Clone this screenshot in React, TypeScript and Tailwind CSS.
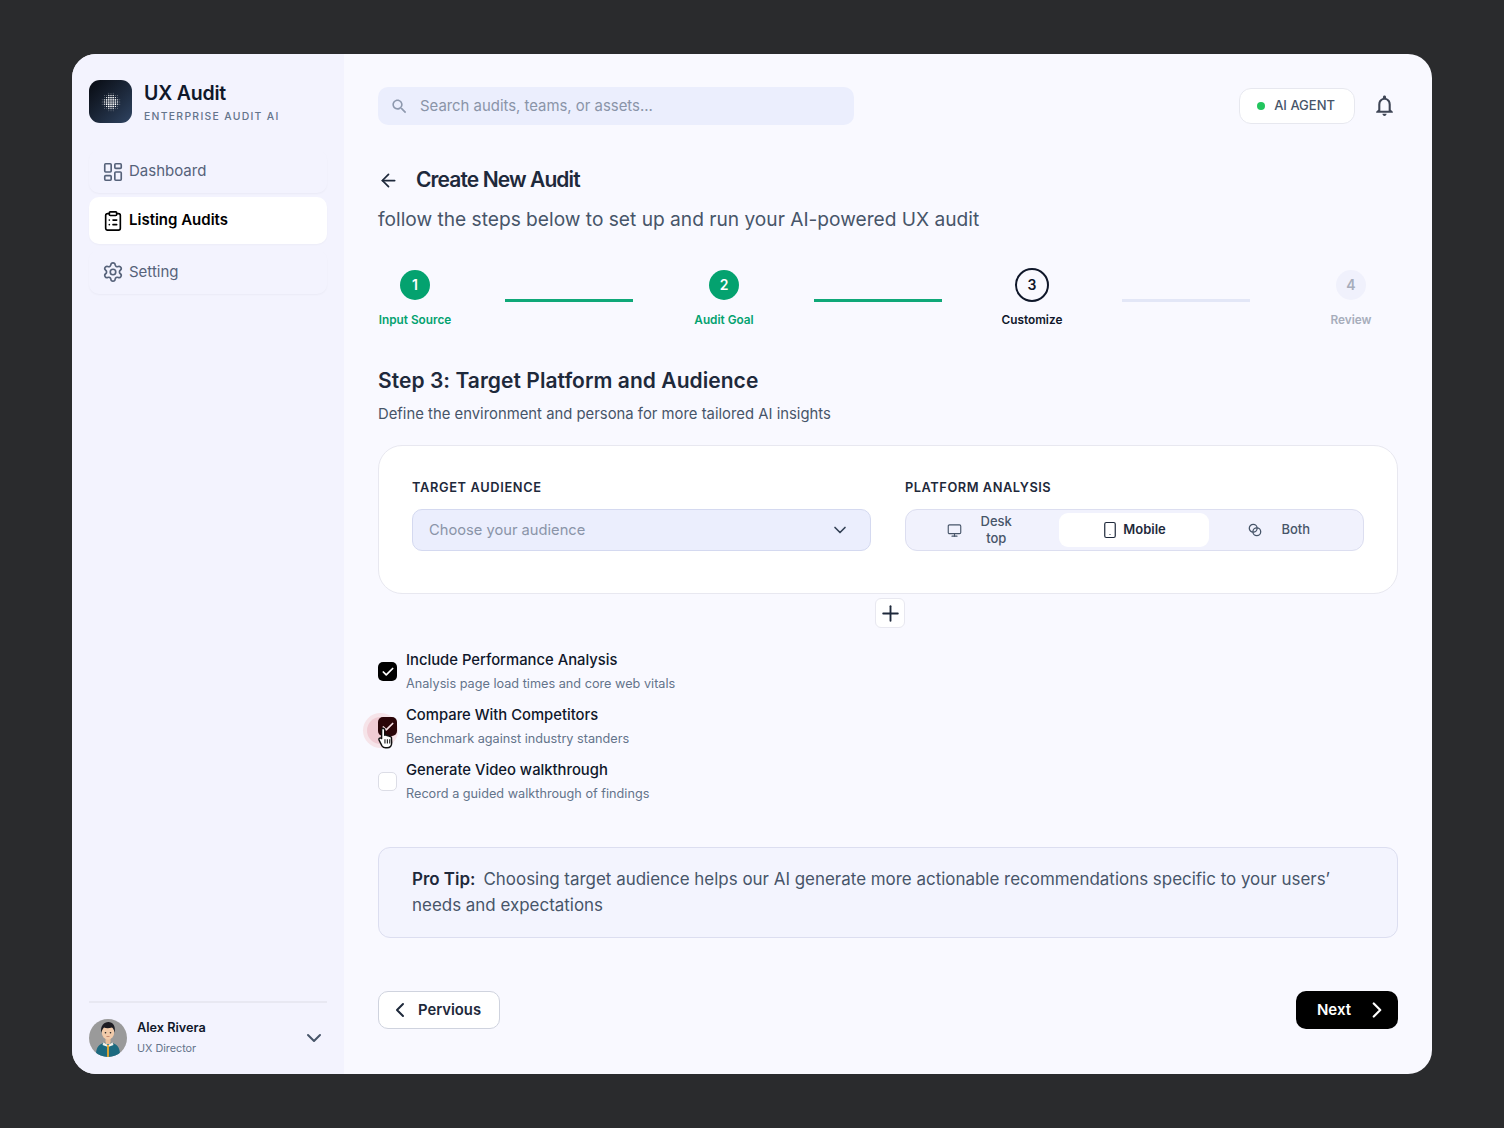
import { useState } from 'react';
import {
  ArrowLeft, Check, ChevronDown, ChevronLeft, ChevronRight, ClipboardList,
  LayoutDashboard, Monitor, Plus, Settings, Smartphone,
} from 'lucide-react';

const NAV = [
  { label: 'Dashboard', icon: LayoutDashboard, active: false },
  { label: 'Listing Audits', icon: ClipboardList, active: true },
  { label: 'Setting', icon: Settings, active: false },
];

const OPTIONS = [
  { title: 'Include Performance Analysis', desc: 'Analysis page load times and core web vitals', checked: true, hover: false },
  { title: 'Compare With Competitors', desc: 'Benchmark against industry standers', checked: true, hover: true },
  { title: 'Generate Video walkthrough', desc: 'Record a guided walkthrough of findings', checked: false, hover: false },
];

function LogoDots() {
  const dots = [];
  for (let y = 0; y < 9; y++) {
    for (let x = 0; x < 9; x++) {
      const d = Math.hypot(x - 4, y - 4);
      if (d > 4.3) continue;
      dots.push(<circle key={`${x}-${y}`} cx={1.2 + x * 2.2} cy={1.2 + y * 2.2} r={d < 2.3 ? 0.85 : d < 3.3 ? 0.65 : 0.42} fill="#fff" opacity={d < 3.3 ? 1 : 0.7} />);
    }
  }
  return <svg width="20" height="20" viewBox="0 0 20 20">{dots}</svg>;
}

function AvatarArt() {
  return (
    <svg width="38" height="38" viewBox="0 0 38 38" className="rounded-full">
      <rect width="38" height="38" fill="#9a9a9a" />
      <path d="M7 36c0-8 3-11 8-12l4-1 4 1c5 1 8 4 8 12l-4 2H11z" fill="#1c6a80" />
      <path d="M14.500 23.500l4.500 2.500 4.500-2.500 1 2.500-5.500 2-5.500-2z" fill="#f4f1ea" />
      <rect x="18.100" y="26" width="1.800" height="12" fill="#eda92c" />
      <rect x="16.500" y="18" width="5" height="7" fill="#e9bd9a" />
      <ellipse cx="19" cy="13.500" rx="6.200" ry="7.200" fill="#f2cbaa" />
      <path d="M12.300 14c-1.300-7.500 3-11 7-11 4.500 0 7.500 3.500 6.400 11-.5-3-1.300-4.800-2.700-5.500-3 1-6 1-8 0-1.200 1-2.200 3-2.700 5.500z" fill="#1d1c22" />
      <circle cx="16.500" cy="13.800" r=".8" fill="#222" />
      <circle cx="21.500" cy="13.800" r=".8" fill="#222" />
      <path d="M17.500 17.500h3" stroke="#a8604a" strokeWidth=".6" />
    </svg>
  );
}

function SearchGlyph() {
  return (
    <svg width="19" height="19" viewBox="0 0 24 24" fill="#8e99ae" className="shrink-0">
      <path d="M15.500 14h-.79l-.28-.27C15.410 12.590 16 11.110 16 9.500 16 5.910 13.090 3 9.500 3S3 5.910 3 9.500 5.910 16 9.500 16c1.610 0 3.090-.59 4.230-1.570l.27.28v.79l5 4.990L20.490 19l-4.990-5zm-6 0C7.010 14 5 11.990 5 9.500S7.010 5 9.500 5 14 7.010 14 9.500 11.990 14 9.500 14z" />
    </svg>
  );
}

function BellGlyph() {
  return (
    <svg width="25" height="25" viewBox="0 0 24 24" fill="#3f4656" className="-mt-[2px] ml-[17px] mr-[1px]">
      <path d="M12 22c1.100 0 2-.9 2-2h-4c0 1.100.89 2 2 2zm6-6v-5c0-3.070-1.640-5.640-4.500-6.320V4c0-.83-.67-1.500-1.500-1.500s-1.500.67-1.500 1.500v.68C7.630 5.360 6 7.920 6 11v5l-2 2v1h16v-1l-2-2zm-2 1H8v-6c0-2.480 1.510-4.500 4-4.500s4 2.020 4 4.500v6z" />
    </svg>
  );
}

function BothIcon() {
  return (
    <svg width="14" height="14" viewBox="0 0 14 14" fill="none" stroke="#475569" strokeWidth="1.300">
      <circle cx="5.200" cy="5.200" r="3.900" />
      <circle cx="8.800" cy="8.800" r="3.900" />
    </svg>
  );
}

function HandCursor() {
  return (
    <svg width="20" height="24" viewBox="0 0 16 20" className="absolute -left-[1px] top-[9px]">
      <path
        d="M4.600 1.800c.9 0 1.500.6 1.500 1.500v4.400l.2-.1c.8-.3 1.500 0 1.800.5.8-.3 1.500 0 1.800.6.800-.3 1.700.2 1.800 1l.2 4.300c0 2.400-1.500 4.200-3.800 4.200H6.800c-1.400 0-2.300-.6-3-1.700L1.500 12c-.5-.8-.2-1.600.4-1.900.6-.3 1.200-.1 1.600.4V3.300c0-.9.400-1.500 1.100-1.500z"
        fill="#fff"
        stroke="#111"
        strokeWidth="1.200"
        strokeLinejoin="round"
      />
      <path d="M6.300 11v3.500M8.300 11v3.500M10.300 11v3.500" stroke="#111" strokeWidth=".9" />
    </svg>
  );
}

function Step({ n, label, state, width, ml }: { n: number; label: string; state: 'done' | 'current' | 'todo'; width: string; ml: string }) {
  return (
    <div className={`flex flex-col items-center ${width} ${ml}`}>
      {state === 'done' && (
        <div className="flex h-[30px] w-[30px] items-center justify-center rounded-full bg-[#04a26f] text-sm font-semibold text-white">{n}</div>
      )}
      {state === 'current' && (
        <div className="flex h-[34px] w-[34px] -my-[2px] items-center justify-center rounded-full border-2 border-[#0f172a] text-sm font-semibold text-[#0f172a]">{n}</div>
      )}
      {state === 'todo' && (
        <div className="flex h-[30px] w-[30px] items-center justify-center rounded-full bg-[#f0f1fc] text-sm font-semibold text-[#a7adbb]">{n}</div>
      )}
      <span
        className={`mt-[12px] text-[11.800px] font-semibold leading-[16px] whitespace-nowrap ${
          state === 'done' ? 'text-[#04a26f]' : state === 'current' ? 'text-[#0f172a]' : 'text-[#a7adbb]'
        }`}
      >
        {label}
      </span>
    </div>
  );
}

export default function App() {
  const [query, setQuery] = useState('');

  return (
    <div className="flex h-[1128px] w-[1504px] items-start justify-center bg-[#2a2b2d] pt-[54px] font-['Inter',sans-serif]">
      <div className="flex h-[1020px] w-[1360px] overflow-hidden rounded-[24px] bg-[#f9f9ff]">
        {/* Sidebar */}
        <aside className="flex w-[272px] shrink-0 flex-col bg-[#f3f3fe] px-[17px] pt-[25px]">
          <div className="flex items-center gap-[12px]">
            <div className="flex h-[43px] w-[43px] items-center justify-center rounded-[11px] bg-gradient-to-br from-[#080b12] to-[#2f4462]">
              <LogoDots />
            </div>
            <div className="mt-[1px]">
              <div className="text-[19.500px] font-semibold leading-[26px] tracking-[-0.2px] text-[#0f172a]">UX Audit</div>
              <div className="mt-[4px] text-[10.400px] font-medium leading-[14px] tracking-[1.3px] text-[#64748b]">ENTERPRISE AUDIT AI</div>
            </div>
          </div>

          <nav className="mt-[26px] flex flex-col">
            {NAV.map(item => {
              const Icon = item.icon;
              return (
                <div
                  key={item.label}
                  className={
                    item.active
                      ? 'mb-[6px] flex h-[47px] items-center gap-[5px] rounded-[10px] bg-white px-[13px] text-[15px] font-semibold text-black shadow-[0_1px_2px_rgba(15,23,42,0.03)]'
                      : 'mb-[4px] flex h-[44px] items-center gap-[5px] rounded-[10px] px-[13px] text-[15px] text-[#56627a] shadow-[0_1px_2px_rgba(15,23,42,0.04)] first:h-[43px]'
                  }
                >
                  <Icon className="h-[22px] w-[22px]" strokeWidth={1.8} />
                  {item.label}
                </div>
              );
            })}
          </nav>

          <div className="mt-auto flex h-[73px] items-center border-t-2 border-[#e8e8f2] pb-[1px]">
            <AvatarArt />
            <div className="ml-[10px] flex-1">
              <div className="-mt-[1px] text-[12.700px] font-semibold leading-[18px] text-[#0f172a]">Alex Rivera</div>
              <div className="mt-[4px] text-[10.800px] leading-[16px] text-[#64748b]">UX Director</div>
            </div>
            <ChevronDown className="mr-[1px] h-[24px] w-[24px] text-[#475569]" strokeWidth={2} />
          </div>
        </aside>

        {/* Main */}
        <main className="flex min-w-0 flex-1 flex-col px-[34px] pt-[33px]">
          <header className="flex items-center justify-between">
            <label className="flex h-[38px] w-[476px] items-center gap-[11px] rounded-[10px] bg-[#ebeefd] pl-[12px] pr-[14px]">
              <SearchGlyph />
              <input
                value={query}
                onChange={e => setQuery(e.target.value)}
                placeholder="Search audits, teams, or assets..."
                className="w-full bg-transparent text-[14.900px] text-[#0f172a] outline-none placeholder:text-[#8a94a8]"
              />
            </label>
            <div className="flex items-center">
              <div className="flex h-[36px] items-center gap-[9px] rounded-[12px] border border-[#e7e8ef] bg-white pl-[17px] pr-[19px] text-[13px] font-medium text-[#475569]">
                <span className="h-[8px] w-[8px] rounded-full bg-[#22c55e]" />
                AI AGENT
              </div>
              <BellGlyph />
            </div>
          </header>

          <div className="mt-[38px] flex h-[34px] items-center gap-[17px]">
            <ArrowLeft className="h-[21px] w-[21px] text-[#1e293b]" strokeWidth={2} />
            <h1 className="text-[21px] font-semibold tracking-[-0.9px] text-[#1e293b]">Create New Audit</h1>
          </div>
          <p className="mt-[7px] text-[19.150px] leading-[30px] text-[#475569]">follow the steps below to set up and run your AI-powered UX audit</p>

          <div className="mt-[36px] flex items-start">
            <Step n={1} label="Input Source" state="done" width="w-[74px]" ml="" />
            <div className="ml-[53px] mt-[29px] h-[2.500px] w-[128px] bg-[#0fa878]" />
            <Step n={2} label="Audit Goal" state="done" width="w-[76px]" ml="ml-[53px]" />
            <div className="ml-[52px] mt-[29px] h-[2.500px] w-[128px] bg-[#0fa878]" />
            <Step n={3} label="Customize" state="current" width="w-[76px]" ml="ml-[52px]" />
            <div className="ml-[52px] mt-[29px] h-[2.500px] w-[128px] bg-[#e3e7f7]" />
            <Step n={4} label="Review" state="todo" width="w-[76px]" ml="ml-[63px]" />
          </div>

          <h2 className="mt-[37px] text-[21px] font-semibold leading-[32px] tracking-[0.05px] text-[#1e293b]">Step 3: Target Platform and Audience</h2>
          <p className="mt-[6px] text-[14.850px] leading-[22px] text-[#475569]">Define the environment and persona for more tailored AI insights</p>

          <section className="mt-[20px] h-[149px] rounded-[24px] border border-[#e8e8f0] bg-white px-[33px] pt-[33px]">
            <div className="flex gap-[34px]">
              <div className="w-[459px]">
                <div className="text-[12.800px] font-semibold leading-[18px] tracking-[0.65px] text-[#1e293b]">TARGET AUDIENCE</div>
                <div className="mt-[12px] flex h-[42px] items-center justify-between rounded-[10px] border border-[#d4d9f0] bg-[#ebeefd] pl-[16px] pr-[20px] text-[14.700px] text-[#8a94a8]">
                  Choose your audience
                  <ChevronDown className="h-[20px] w-[20px] text-[#334155]" strokeWidth={2} />
                </div>
              </div>
              <div className="w-[459px]">
                <div className="text-[12.800px] font-semibold leading-[18px] tracking-[0.55px] text-[#1e293b]">PLATFORM ANALYSIS</div>
                <div className="mt-[12px] flex h-[42px] items-center rounded-[12px] border border-[#dcdef0] bg-[#f1f2fd] px-[3px] text-[13px] font-medium text-[#475569]">
                  <div className="flex h-[34px] flex-1 items-center justify-center gap-[18px] pr-[8px]">
                    <Monitor className="h-[15px] w-[15px]" strokeWidth={1.8} />
                    <span className="w-[32px] text-center leading-[17px]">Desk top</span>
                  </div>
                  <div className="flex h-[34px] w-[150px] items-center justify-center gap-[4px] rounded-[9px] bg-white font-semibold text-[#1e293b]">
                    <Smartphone className="h-[18px] w-[18px]" strokeWidth={1.6} />
                    Mobile
                  </div>
                  <div className="flex h-[34px] flex-1 items-center justify-center gap-[19px] pr-[10px]">
                    <BothIcon />
                    Both
                  </div>
                </div>
              </div>
            </div>
          </section>

          <div className="-mb-[4px] ml-[4px] mt-[4px] flex justify-center">
            <div className="flex h-[30px] w-[30px] items-center justify-center rounded-[6px] border border-[#e8e8f0] bg-white">
              <Plus className="h-[25px] w-[25px] text-[#1e293b]" strokeWidth={1.8} />
            </div>
          </div>

          <div className="mt-[24px] flex flex-col">
            {OPTIONS.map(o => (
              <div key={o.title} className="mb-[9px] flex h-[46px] items-start gap-[9px]">
                <div className="relative mt-[14px]">
                  {o.hover && <span className="absolute -left-[15px] -top-[4px] h-[35px] w-[35px] rounded-full bg-[#f6e4e9]" />}
                  {o.hover && <span className="absolute -left-[11px] top-0 h-[27px] w-[27px] rounded-full bg-[#f0ccd4]" />}
                  <div
                    className={
                      o.checked
                        ? `relative flex h-[19px] w-[19px] items-center justify-center rounded-[5px] ${o.hover ? 'bg-[#2a0508]' : 'bg-black'}`
                        : 'relative h-[19px] w-[19px] rounded-[5px] border border-[#dcdde6] bg-white'
                    }
                  >
                    {o.checked && <Check className={`h-[14px] w-[14px] ${o.hover ? 'text-[#f6dfe3]' : 'text-white'}`} strokeWidth={3} />}
                  </div>
                  {o.hover && <HandCursor />}
                </div>
                <div className="mt-[1px]">
                  <div className="text-[14.800px] font-medium leading-[22px] text-[#0f172a]">{o.title}</div>
                  <div className="mt-[4px] text-[12.700px] leading-[18px] text-[#64748b]">{o.desc}</div>
                </div>
              </div>
            ))}
          </div>

          <div className="mt-[34px] h-[91px] rounded-[12px] border border-[#dcdef0] bg-[#f3f4fe] px-[33px] pt-[18px] text-[16.950px] leading-[26px] text-[#475569]">
            <span className="mr-[8px] font-semibold text-[#1e293b]">Pro Tip:</span>
            Choosing target audience helps our AI generate more actionable recommendations specific to your users’ needs and expectations
          </div>

          <div className="mt-[53px] flex items-center justify-between">
            <button className="flex h-[38px] items-center gap-[6px] rounded-[10px] border border-[#cfd3de] bg-white pl-[9px] pr-[18px] text-[14.800px] font-semibold text-[#1e293b]">
              <ChevronLeft className="h-[24px] w-[24px]" strokeWidth={2} />
              Pervious
            </button>
            <button className="flex h-[38px] items-center gap-[13px] rounded-[10px] bg-black pl-[21px] pr-[8px] text-[15px] font-semibold text-white">
              Next
              <ChevronRight className="h-[26px] w-[26px]" strokeWidth={2} />
            </button>
          </div>
        </main>
      </div>
    </div>
  );
}
